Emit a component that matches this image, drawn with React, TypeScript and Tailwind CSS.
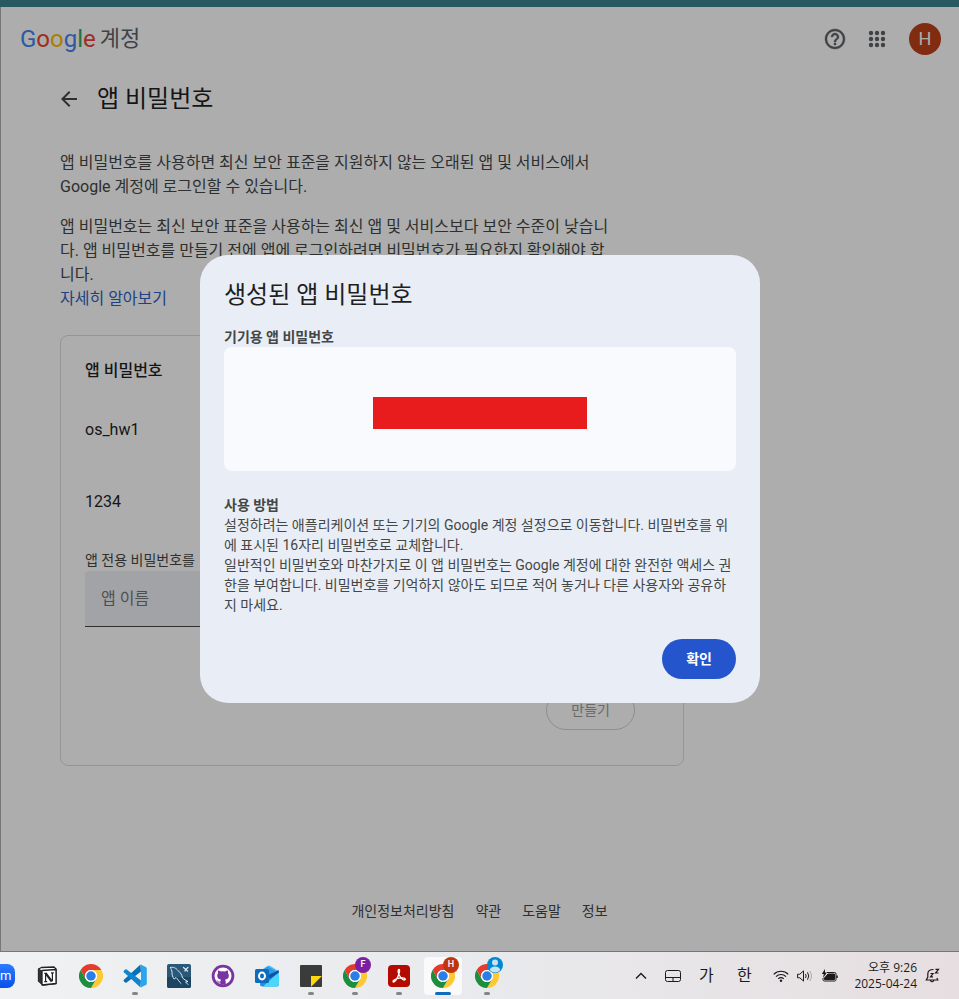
import type { ReactNode } from "react";

function ChromeIcon() {
  return (
    <svg viewBox="0 0 48 48" className="size-6" aria-hidden="true">
      <circle cx="24" cy="24" r="24" fill="#fff" />
      <path d="M3.2 12A24 24 0 0 1 44.8 12H24a12 12 0 0 0-10.4 18z" fill="#e33b2e" />
      <path d="M44.8 12A24 24 0 0 1 24 48l10.4-18A12 12 0 0 0 24 12z" fill="#fcc934" />
      <path d="M24 48A24 24 0 0 1 3.2 12l10.4 18a12 12 0 0 0 20.8 0z" fill="#1e8e3e" />
      <circle cx="24" cy="24" r="12" fill="#fff" />
      <circle cx="24" cy="24" r="9.5" fill="#2b7de9" />
    </svg>
  );
}

function NotionIcon() {
  return (
    <svg viewBox="0 0 24 24" className="size-6" strokeLinejoin="round" aria-hidden="true">
      <path d="M3.500 5 6.500 3.500 19 3l2 2v14.500l-13 1.500-4.500-4z" fill="#fff" stroke="#222" strokeWidth="1.300" />
      <path d="M3.500 4.500 7 6.500V21l-3.500-4z" fill="#333" />
      <path d="M7 6.500 21 5.500v14L7 21z" fill="#fff" stroke="#222" strokeWidth="1.300" />
      <path d="M9.300 9.300h2.700M10.600 9.300v8.400M9.300 17.700h2.900M16 8.800h2.800M17.400 8.800v8.400" stroke="#222" strokeWidth="1.200" />
      <path d="m10.800 9.300 6 8.200" stroke="#222" strokeWidth="2.200" />
    </svg>
  );
}

function VsCodeIcon() {
  return (
    <svg viewBox="0 0 24 24" className="size-6" aria-hidden="true">
      <path d="M17.500.5.9 15.700q-.8.800 0 1.600l1.300 1.200q.7.600 1.500 0L18 7.500z" fill="#0a6fb5" />
      <path d="M17.500 23.500.9 8.300q-.8-.800 0-1.600l1.300-1.200q.7-.600 1.500 0L18 16.500z" fill="#0f84cf" />
      <path d="m17.300.200 5.500 2.700q1 .5 1 1.600v15q0 1.100-1 1.600l-5.500 2.700q.700-.4.700-1.300V1.500q0-.9-.7-1.300z" fill="#2aa5ee" />
    </svg>
  );
}

function WorkbenchIcon() {
  return (
    <svg viewBox="0 0 24 24" className="size-6" fill="none" stroke="#dbe7f0" strokeLinecap="round" strokeLinejoin="round" aria-hidden="true">
      <rect width="24" height="24" rx="2" fill="#2a5878" stroke="none" />
      <path d="M0 13h24v9a2 2 0 0 1-2 2H2a2 2 0 0 1-2-2z" fill="#1b4563" stroke="none" />
      <path d="M3.500 3.500c2.500-1 5.500.5 7.500 3 2.500 2.500 4 4 4.500 7.500 1.500 1.500 3.500 2.500 5.500 3.500l-2.500.5 2.500 2.500M3.500 3.500c.5 2 1.500 2.500 1.500 5 0 2 .5 4.500 2 6.500 1 .5 1-1.500 2-1.500 2 1.500 3 4.500 5 6" strokeWidth="1" />
      <path d="m16.500 3.500 4 3.500m-2-1.500L21 3.500m-2.500 2-.5 1.500" strokeWidth="1.300" />
    </svg>
  );
}

function GithubDesktopIcon() {
  return (
    <svg viewBox="0 0 24 24" className="size-6" aria-hidden="true">
      <circle cx="12" cy="12" r="11.300" fill="#7a34a0" />
      <circle cx="12" cy="12" r="8.500" fill="#fff" />
      <path d="M7.200 6.500c1.300 0 2.300.7 2.700 1q2.100-.5 4.200 0c.4-.3 1.400-1 2.700-1 .4 1 .3 1.900.1 2.400 1 1.200 1.100 2.400.9 3.700-.3 1.900-1.700 2.800-3.800 3.100.5.600.7 1.200.7 2v2.600q-2.700.7-5.400 0v-1.700c-1.800.4-2.500-.4-3.100-1.600l-.8-.8c1.200-.4 1.700 1.300 2.500 1.400q.8.200 1.500-.1c0-.7.200-1.300.7-1.800-2.100-.3-3.500-1.200-3.800-3.100-.2-1.300 0-2.500.8-3.700-.2-.5-.3-1.400.1-2.400z" fill="#7a34a0" />
    </svg>
  );
}

function OutlookIcon() {
  return (
    <svg viewBox="0 0 24 24" className="size-6" aria-hidden="true">
      <path d="M4 7.500 12.500 2q1.500-1 3 0L24 7.500v4H4z" fill="#4fc3f7" />
      <path d="M6 7 13 2.300 21 7l-8 6z" fill="#2f9be6" />
      <path d="M5 9h19v11q0 2.500-2.500 2.500h-14Q5 22.500 5 20z" fill="#1b8fe0" />
      <path d="M24 8v12q0 2.500-2.500 2.500H8z" fill="#4dd6fb" />
      <path d="m12 12 11.500-6 .5 2.500-9 6z" fill="#0f4fa8" />
      <rect y="5" width="14" height="14" rx="1.500" fill="#0f6cbd" />
      <ellipse cx="7" cy="12" rx="3" ry="3.400" fill="none" stroke="#fff" strokeWidth="2" />
    </svg>
  );
}

function StickyNotesIcon() {
  return (
    <svg viewBox="0 0 24 24" className="size-6" aria-hidden="true">
      <path d="M2 1h20q1 0 1 1v10L12 23H2q-1 0-1-1V2q0-1 1-1z" fill="#3b3b3b" />
      <path d="M12 12h11L12 23z" fill="#ffd90a" />
      <path d="M23 12v10q0 1-1 1H12z" fill="#3b3b3b" />
    </svg>
  );
}

function AcrobatIcon() {
  return (
    <svg viewBox="0 0 24 24" className="size-6" fill="none" aria-hidden="true">
      <rect x="1" y="1" width="22" height="22" rx="4" fill="#b30b00" />
      <path d="M12 5.500c-1.400 0-1 3.200.2 5.500 1.400 2.700 3.700 5 5.200 5 1.300 0 1.500-1.900-1.400-2.100-3.300-.2-7 .8-9 2.100-1.900 1.300-.8 2.700.5 1.600 1.600-1.400 3.700-5.200 4.700-8.600.5-1.700.6-3.500-.2-3.500z" stroke="#fff" strokeWidth="1.300" />
    </svg>
  );
}

function AccountBadge({ children, className }: { children: ReactNode; className: string }) {
  return (
    <span className={`absolute left-1/2 top-0 flex size-4 items-center justify-center overflow-hidden rounded-full text-[9px] leading-none font-medium text-white ${className}`}>
      {children}
    </span>
  );
}

type Task = { name: string; icon: ReactNode; running?: boolean; active?: boolean };

const tasks: Task[] = [
  { name: "Notion", icon: <NotionIcon /> },
  { name: "Chrome", icon: <ChromeIcon /> },
  { name: "Visual Studio Code", icon: <VsCodeIcon />, running: true },
  { name: "MySQL Workbench", icon: <WorkbenchIcon /> },
  { name: "GitHub Desktop", icon: <GithubDesktopIcon /> },
  { name: "Outlook", icon: <OutlookIcon /> },
  { name: "Sticky Notes", icon: <StickyNotesIcon />, running: true },
  { name: "Chrome F", icon: <><ChromeIcon /><AccountBadge className="bg-[#7b1fa2]">F</AccountBadge></>, running: true },
  { name: "Acrobat", icon: <AcrobatIcon />, running: true },
  { name: "Chrome H", icon: <><ChromeIcon /><AccountBadge className="bg-[#bf360c]">H</AccountBadge></>, running: true, active: true },
  {
    name: "Chrome user",
    icon: (
      <>
        <ChromeIcon />
        <AccountBadge className="bg-[#0288d1]">
          <svg viewBox="0 0 16 16" className="size-4" fill="#c5e3f6" aria-hidden="true">
            <circle cx="8" cy="5.500" r="3" />
            <ellipse cx="8" cy="12.500" rx="5" ry="3" />
          </svg>
        </AccountBadge>
      </>
    ),
    running: true,
  },
];

function TaskButton({ task }: { task: Task }) {
  return (
    <button type="button" aria-label={task.name} className="relative flex h-[47px] w-11 shrink-0 items-center justify-center">
      <span className={`relative flex h-[38px] w-[38px] items-center justify-center rounded ${task.active ? "bg-[#fafafb]" : ""}`}>{task.icon}</span>
      {task.running && (
        <span className={`absolute bottom-1 left-1/2 h-[3px] -translate-x-1/2 rounded-full ${task.active ? "w-4 bg-[#0f6cbd]" : "w-[6px] bg-[#858585]"}`} />
      )}
    </button>
  );
}

function Tray() {
  return (
    <div className="flex items-center pr-[19px] text-[#1b1b1b]">
      <button type="button" aria-label="숨겨진 아이콘 표시" className="flex w-8 justify-center">
        <svg viewBox="0 0 12 8" className="h-2 w-3" fill="none" stroke="currentColor" strokeWidth="1.400" aria-hidden="true"><path d="m1 6.500 5-5 5 5" /></svg>
      </button>
      <button type="button" aria-label="터치 패드" className="flex w-8 justify-center">
        <svg viewBox="0 0 16 12" className="h-3 w-4" fill="none" stroke="currentColor" aria-hidden="true"><rect x=".5" y=".5" width="15" height="11" rx="2" /><path d="M.5 7.500h15M8 7.500v4" /></svg>
      </button>
      <button type="button" className="w-[34px] text-base leading-5">가</button>
      <button type="button" className="w-[42px] text-base leading-5">한</button>
      <button type="button" aria-label="네트워크, 볼륨, 배터리" className="ml-[8px] flex items-center gap-2">
        <svg viewBox="0 0 16 12" className="h-3 w-4" fill="none" stroke="currentColor" strokeWidth="1.200" aria-hidden="true">
          <path d="M.7 4.300a10.300 10.300 0 0 1 14.600 0M3 6.600a7 7 0 0 1 10 0M5.300 8.800a3.800 3.800 0 0 1 5.400 0" />
          <circle cx="8" cy="10.700" r="1.200" fill="currentColor" stroke="none" />
        </svg>
        <svg viewBox="0 0 16 12" className="h-3 w-4" fill="none" stroke="currentColor" aria-hidden="true">
          <path d="M.6 4.200h2.200L6.500.9v10.200L2.800 7.800H.6z" strokeLinejoin="round" />
          <path d="M8.500 4q1.300 2 0 4M10.500 2.300q2.500 3.700 0 7.400" />
          <path d="M12.700 1q3.500 5 0 10" stroke="#aaa" />
        </svg>
        <svg viewBox="0 0 17 14" className="h-[14px] w-[17px]" fill="none" stroke="currentColor" aria-hidden="true">
          <path d="M6 3.500h7.500q1.500 0 1.500 1.500v5.500q0 1.500-1.500 1.500h-10Q2 12 2 10.500V9" />
          <path d="M7 5h6.500v5.500h-10V9z" fill="currentColor" />
          <path d="M16 6.500v2.500" strokeWidth="1.500" />
          <path d="M4 0 .8 5h2L2 9l4-5.500H4z" fill="currentColor" stroke="none" />
        </svg>
      </button>
      <button type="button" className="ml-4 text-right font-['Open_Sans','Noto_Sans_CJK_KR',sans-serif] text-xs leading-4">
        <span className="block">오후 9:26</span>
        <span className="block">2025-04-24</span>
      </button>
      <button type="button" aria-label="알림" className="ml-2">
        <svg viewBox="0 0 15 15" className="size-[15px]" fill="none" stroke="currentColor" strokeWidth="1.200" aria-hidden="true">
          <path d="M8.500 1.500Q2.800 1.500 2.800 6v3L1.300 12h11.500l-.9-2M5.300 12.500q1.800 2.500 3.600 0" />
          <path d="M5.500 5.500H8L5.500 8.800H8M10.500 1.300h3l-3 3.700h3" />
        </svg>
      </button>
    </div>
  );
}

function Dialog() {
  return (
    <div className="absolute inset-0 flex items-center justify-center bg-black/32">
      <section role="dialog" aria-modal="true" aria-labelledby="dialog-title" className="w-full max-w-[560px] rounded-[28px] bg-[#e9eef6] p-6 text-sm text-[#444746]">
        <h2 id="dialog-title" className="text-2xl leading-8 text-[#1f1f1f]">생성된 앱 비밀번호</h2>
        <h3 className="mt-4 font-bold">기기용 앱 비밀번호</h3>
        <div className="flex h-[124px] items-end justify-center rounded-lg bg-[#f8fafd] pb-[42px]">
          <div className="h-8 w-[214px] bg-[#e81c1c]" />
        </div>
        <h3 className="mt-6 font-bold">사용 방법</h3>
        <p>설정하려는 애플리케이션 또는 기기의 Google 계정 설정으로 이동합니다. 비밀번호를 위에 표시된 16자리 비밀번호로 교체합니다.</p>
        <p>일반적인 비밀번호와 마찬가지로 이 앱 비밀번호는 Google 계정에 대한 완전한 액세스 권한을 부여합니다. 비밀번호를 기억하지 않아도 되므로 적어 놓거나 다른 사용자와 공유하지 마세요.</p>
        <div className="mt-6 flex justify-end">
          <button type="button" className="h-10 rounded-full bg-[#2455cc] px-6 font-bold text-white">확인</button>
        </div>
      </section>
    </div>
  );
}

export default function App() {
  return (
    <div className="flex min-h-screen flex-col bg-white font-[Roboto,'Noto_Sans_CJK_KR',sans-serif] text-[#444746]">
      <div className="h-[7px] bg-[#265a60]" />
      <div className="relative flex flex-1 flex-col border-l border-[#777]">
        <header className="flex h-16 items-center justify-between pr-[18px] pl-[19px]">
          <a href="#home" className="flex items-center gap-1 text-[22px] leading-8 text-[#5f6368]">
            <span className="text-2xl">
              <span className="text-[#4285f4]">G</span>
              <span className="text-[#ea4335]">o</span>
              <span className="text-[#fbbc04]">o</span>
              <span className="text-[#4285f4]">g</span>
              <span className="text-[#34a853]">l</span>
              <span className="text-[#ea4335]">e</span>
            </span>
            계정
          </a>
          <div className="flex items-center gap-5">
            <div className="flex items-center gap-[18px]">
              <button type="button" aria-label="도움말">
                <svg viewBox="0 0 24 24" className="size-6" fill="#5f6368" stroke="#5f6368" strokeWidth="0.400" aria-hidden="true">
                  <path d="M11 18h2v-2h-2v2zm1-16C6.480 2 2 6.480 2 12s4.480 10 10 10 10-4.480 10-10S17.520 2 12 2zm0 18c-4.410 0-8-3.590-8-8s3.590-8 8-8 8 3.590 8 8-3.590 8-8 8zm0-14c-2.210 0-4 1.790-4 4h2c0-1.100.9-2 2-2s2 .9 2 2c0 2-3 1.750-3 5h2c0-2.250 3-2.500 3-5 0-2.210-1.790-4-4-4z" />
                </svg>
              </button>
              <button type="button" aria-label="Google 앱">
                <svg viewBox="0 0 24 24" className="size-6" fill="#5f6368" aria-hidden="true">
                  {[6, 12, 18].map((y) => [6, 12, 18].map((x) => <circle key={`${x}-${y}`} cx={x} cy={y} r="2.200" />))}
                </svg>
              </button>
            </div>
            <button type="button" aria-label="계정" className="flex size-8 items-center justify-center rounded-full bg-[#bf4019] text-lg text-white">H</button>
          </div>
        </header>

        <main className="w-full max-w-[683px] flex-1 pl-[59px]">
          <div className="flex items-center gap-5 pt-3">
            <button type="button" aria-label="뒤로">
              <svg viewBox="4 4 16 16" className="ml-[1px] size-4" fill="#444746" aria-hidden="true">
                <path d="M20 11H7.830l5.590-5.590L12 4l-8 8 8 8 1.410-1.410L7.830 13H20v-2z" />
              </svg>
            </button>
            <h1 className="text-2xl leading-8 text-[#1f1f1f]">앱 비밀번호</h1>
          </div>
          <div className="mt-9 flex max-w-[552px] flex-col gap-4">
            <p>앱 비밀번호를 사용하면 최신 보안 표준을 지원하지 않는 오래된 앱 및 서비스에서 Google 계정에 로그인할 수 있습니다.</p>
            <p>
              앱 비밀번호는 최신 보안 표준을 사용하는 최신 앱 및 서비스보다 보안 수준이 낮습니다. 앱 비밀번호를 만들기 전에 앱에 로그인하려면 비밀번호가 필요한지 확인해야 합니다.
              <br />
              <a href="#learn" className="text-[#2f5fc4]">자세히 알아보기</a>
            </p>
          </div>
          <section className="mt-6 rounded-lg border border-[#dadce0] px-6 pt-[23px] pb-[35px]">
            <h2 className="font-medium text-[#1f1f1f]">앱 비밀번호</h2>
            <ul className="mt-[11px] text-[#1f1f1f]">
              <li className="flex h-[72px] items-center">os_hw1</li>
              <li className="flex h-[72px] items-center">1234</li>
            </ul>
            <label htmlFor="app-name" className="mt-3 block text-sm">앱 전용 비밀번호를</label>
            <input id="app-name" placeholder="앱 이름" className="mt-[1px] block h-14 w-full rounded-t border-b border-[#444746] bg-[#eef1f5] px-4 placeholder:text-[#747775]" />
            <div className="mt-[63px] flex justify-end pr-6">
              <button type="button" disabled className="h-10 rounded-full border border-[#d0d1d2] px-6 text-sm text-[#9b9c9d]">만들기</button>
            </div>
          </section>
        </main>

        <footer className="flex justify-center gap-[21px] pr-[1px] pb-[30px] text-sm">
          <a href="#privacy">개인정보처리방침</a>
          <a href="#terms">약관</a>
          <a href="#help">도움말</a>
          <a href="#info">정보</a>
        </footer>
        <Dialog />
      </div>
      <nav aria-label="작업 표시줄" className="flex h-12 justify-between overflow-hidden border-t border-[#777] bg-linear-to-r from-[#eff1f2] via-[#e9eaed] to-[#e6dee0]">
        <div className="flex">
          <button type="button" aria-label="Zoom" className="mr-[10px] flex w-[15px] items-center">
            <span className="flex h-6 w-[15px] items-center rounded-r-lg bg-linear-to-b from-[#2b7bff] to-[#0b4fe8] text-[13px] leading-6 text-white">m</span>
          </button>
          {tasks.map((task) => <TaskButton key={task.name} task={task} />)}
        </div>
        <Tray />
      </nav>
    </div>
  );
}
